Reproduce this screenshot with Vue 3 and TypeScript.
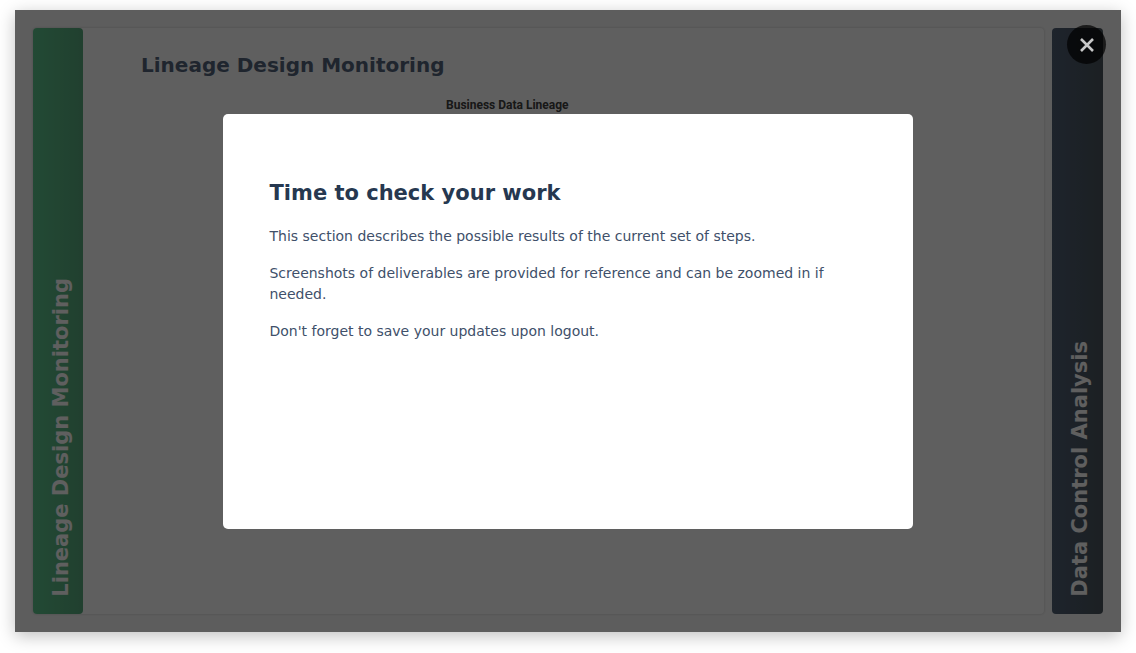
<script setup lang="ts">
import { ref } from 'vue'

const open = ref(true)
const notes: string[] = [
  'This section describes the possible results of the current set of steps.',
  'Screenshots of deliverables are provided for reference and can be zoomed in if needed.',
  "Don't forget to save your updates upon logout.",
]
</script>

<template>
  <main class="page">
    <div class="stage">
      <div class="accordion">
        <section class="panel">
          <h2 class="tab tab-green"><span>Lineage Design Monitoring</span></h2>
          <div class="content">
            <h1 class="title">Lineage Design Monitoring</h1>
            <p class="caption">Business Data Lineage</p>
          </div>
        </section>
        <h2 class="tab tab-navy"><span>Data Control Analysis</span></h2>
      </div>

      <div v-if="open" class="overlay">
        <div class="dialog" role="dialog" aria-modal="true" aria-labelledby="dialog-title">
          <h2 id="dialog-title" class="dialog-title">Time to check your work</h2>
          <p v-for="note in notes" :key="note" class="note">{{ note }}</p>
        </div>
        <button class="close" type="button" aria-label="Close" @click="open = false">
          <svg width="16" height="16" viewBox="0 0 16 16" aria-hidden="true">
            <path d="M2 2 14 14M14 2 2 14" fill="none" stroke="#c8c8c8" stroke-width="2.6" />
          </svg>
        </button>
      </div>
    </div>
  </main>
</template>

<style>
body {
  margin: 0;
  background: #fff;
}
</style>

<style scoped>
.page {
  box-sizing: border-box;
  min-height: 100vh;
  padding: 10px 15px 21px;
  display: flex;
  font-family: "DejaVu Sans", sans-serif;
}
.stage {
  position: relative;
  flex: 1;
  display: flex;
  background: #fafafa;
  box-shadow: 0 4px 16px rgba(0, 0, 0, 0.25);
}
.accordion {
  flex: 1;
  display: flex;
  gap: 8px;
  padding: 18px;
}
.panel {
  flex: 1;
  display: flex;
  background: #fff;
  border-radius: 4px;
  box-shadow: 0 0 3px rgba(0, 0, 0, 0.2);
}
.tab {
  box-sizing: border-box;
  flex: none;
  width: 51px;
  margin: 0;
  padding-bottom: 17px;
  display: flex;
  align-items: flex-end;
  justify-content: center;
  border-radius: 4px;
  color: #fff;
  font-size: 21px;
  line-height: 24px;
}
.tab span {
  writing-mode: vertical-rl;
  transform: rotate(180deg);
  white-space: nowrap;
}
.tab-green {
  width: 50px;
  padding-left: 6px;
  background: linear-gradient(90deg, #5ec68e, #58ab7e);
}
.tab-navy {
  padding-left: 4px;
  background: linear-gradient(90deg, #506076, #4b565e);
}
.content {
  flex: 1;
  padding: 25px 58px;
}
.title {
  margin: 0 0 16px;
  color: #55657c;
  font-size: 20px;
  line-height: 24px;
}
.caption {
  margin: 0 0 0 305px;
  color: #404040;
  font: 700 12px/24px Roboto, sans-serif;
}
.overlay {
  position: absolute;
  inset: 0;
  display: flex;
  align-items: center;
  justify-content: center;
  background: rgba(0, 0, 0, 0.627);
}
.dialog {
  box-sizing: border-box;
  width: 62.3%;
  min-height: 415px;
  padding: 64px 46px;
  background: #fff;
  border-radius: 5px;
}
.dialog-title {
  margin: 0 0 18px;
  color: #263850;
  font-size: 21px;
  line-height: 30px;
}
.note {
  margin: 0 0 16px;
  color: #40506a;
  font-size: 14px;
  line-height: 21px;
}
.close {
  position: absolute;
  top: 15px;
  right: 15px;
  display: flex;
  align-items: center;
  justify-content: center;
  width: 39px;
  height: 39px;
  padding: 0;
  border: 0;
  border-radius: 50%;
  background: rgba(0, 0, 0, 0.7);
  cursor: pointer;
}
</style>
